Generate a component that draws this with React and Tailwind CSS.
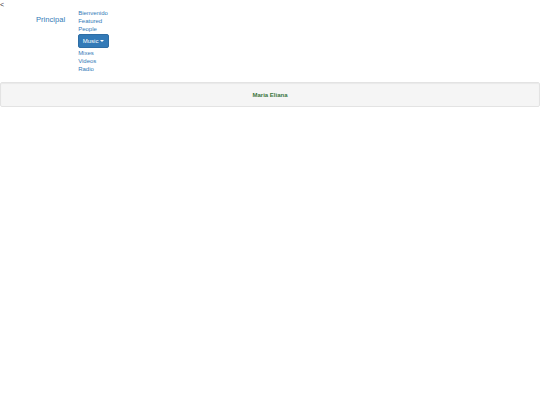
import React from "react";

const links = ["Bienvenido", "Featured", "People"];
const links2 = ["Mixes", "Videos", "Radio"];

const App = () => {
  return (
    <div className="min-h-[405px] bg-white text-[6px] leading-[8px] text-[#333] font-['Liberation_Sans',Arial,sans-serif]">
      <div className="h-[8px] text-[7px] leading-[8px] pt-[1px]">&lt;</div>

      <div className="flex items-start">
        {/* BRAND */}
        <a href="#" className="ml-[36px] mt-[8px] text-[7.6px] leading-[8px] text-[#337ab7]">
          Principal
        </a>

        {/* NAV */}
        <ul className="ml-[13px] mt-[1px] flex flex-col">
          {links.map((l) => (
            <li key={l}>
              <a href="#" className="block h-[8px] text-[#337ab7]">
                {l}
              </a>
            </li>
          ))}
          <li className="py-[1px]">
            <button className="flex items-center gap-[2px] h-[14px] w-[31px] justify-center rounded-[2px] bg-[#337ab7] border border-[#2e6da4] text-white text-[6px]">
              Music
              <span className="w-0 h-0 border-x-[2px] border-x-transparent border-t-[2px] border-t-white" />
            </button>
          </li>
          {links2.map((l) => (
            <li key={l}>
              <a href="#" className="block h-[8px] text-[#337ab7]">
                {l}
              </a>
            </li>
          ))}
        </ul>
      </div>

      {/* WELL */}
      <div className="mt-[9px] h-[25px] flex items-center justify-center bg-[#f5f5f5] border border-[#e3e3e3] rounded-[2px] shadow-[inset_0_1px_1px_rgba(0,0,0,0.05)]">
        <span className="font-bold text-[#3c763d]">Maria Eliana</span>
      </div>
    </div>
  );
};

export default App;
